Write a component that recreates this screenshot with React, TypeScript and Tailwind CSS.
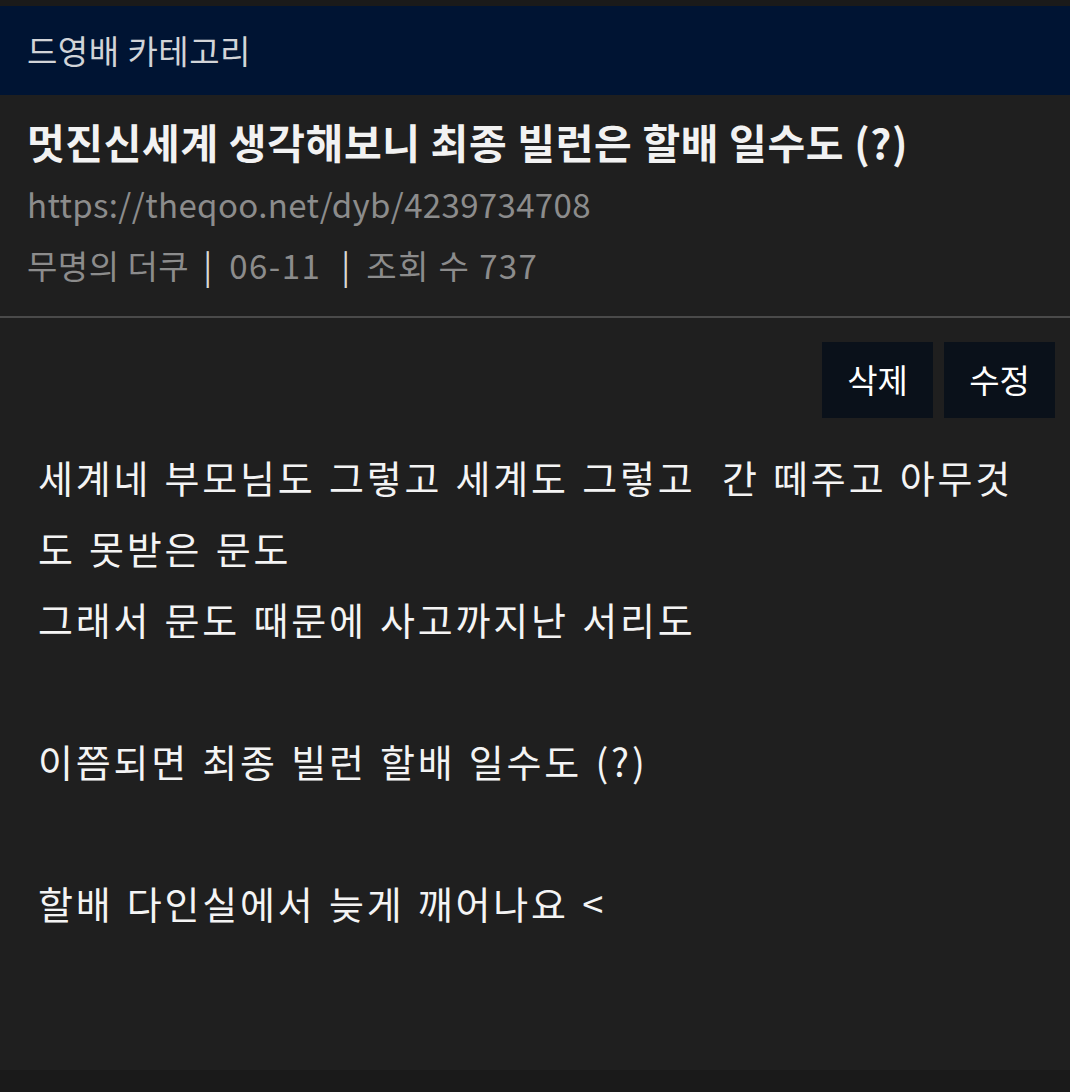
export default function App() {
  const font = { fontFamily: '"Noto Sans CJK KR", "Noto Sans", sans-serif' };
  return (
    <div className="min-h-[1092px] bg-[#1a1a1a] pt-[6px] flex flex-col" style={font}>
      <div className="h-[89px] bg-[#001433] flex items-center px-[27px]">
        <span className="text-[33px] text-[#d2d4d8] tracking-[0.5px]">드영배 카테고리</span>
      </div>
      <div className="bg-[#1f1f1f] flex-1 flex flex-col mb-[22px]">
        <div className="px-[27px] pt-[16px] pb-[22px] border-b-2 border-[#4a4a4a]">
          <h1 className="text-[41px] font-bold text-[#f2f2f2] leading-[61px] tracking-[0.65px] whitespace-nowrap">
            멋진신세계 생각해보니 최종 빌런은 할배 일수도 (?)
          </h1>
          <div className="text-[33px] text-[#8c8c8c] leading-[64px] tracking-[0.35px]">
            https://theqoo.net/dyb/4239734708
          </div>
          <div className="text-[33px] text-[#8c8c8c] leading-[58px] flex items-center">
            <span className="tracking-[0.5px]">무명의 더쿠</span>
            <span className="text-[#d8d8d8] ml-[14px] mr-[17px]">|</span>
            <span className="tracking-[1.5px]">06-11</span>
            <span className="text-[#d8d8d8] ml-[20px] mr-[16px]">|</span>
            <span className="tracking-[1.4px]">조회 수 737</span>
          </div>
        </div>
        <div className="flex justify-end gap-[11px] pr-[15px] pt-[24px]">
          <button className="w-[111px] h-[76px] bg-[#0a111a] text-white text-[33px]">삭제</button>
          <button className="w-[111px] h-[76px] bg-[#0a111a] text-white text-[33px]">수정</button>
        </div>
        <div className="pl-[38px] pt-[23px] pr-[40px] text-[38px] leading-[71px] text-[#f4f4f4] whitespace-pre-wrap tracking-[2.8px] [word-spacing:2px]">
          {`세계네 부모님도 그렇고 세계도 그렇고  간 떼주고 아무것도 못받은 문도
그래서 문도 때문에 사고까지난 서리도

이쯤되면 최종 빌런 할배 일수도 (?)

할배 다인실에서 늦게 깨어나요 <`}
        </div>
      </div>
    </div>
  );
}
